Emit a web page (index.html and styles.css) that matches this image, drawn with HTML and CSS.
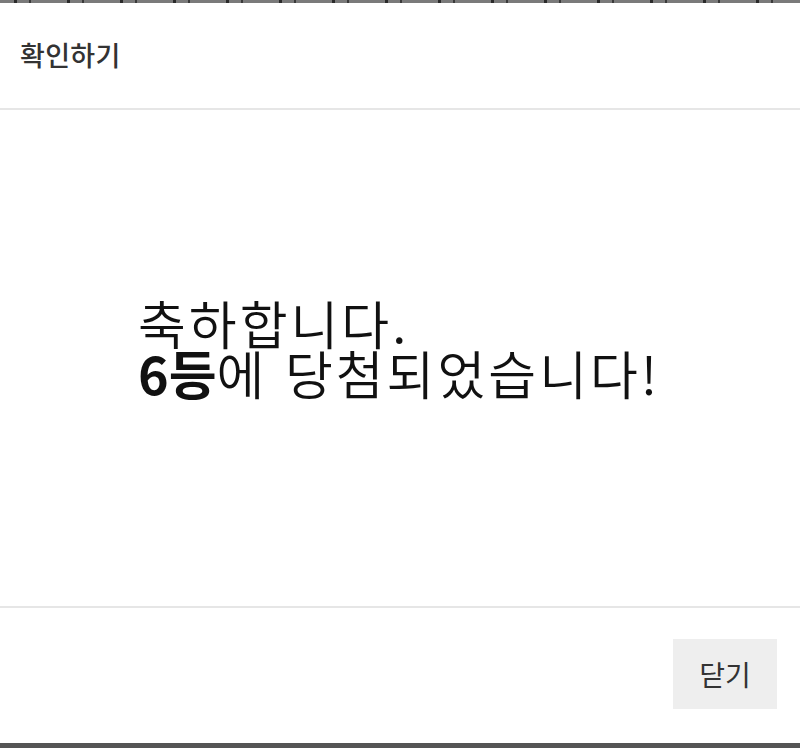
FILE: index.html
```html
<!DOCTYPE html>
<html lang="ko">
<head>
<meta charset="utf-8">
<link rel="stylesheet" href="styles.css">
</head>
<body>
<div class="backdrop-top"></div>
<div class="modal">
  <div class="modal-header">확인하기</div>
  <div class="modal-body">
    <p class="msg">축하합니다.<br><strong>6등</strong>에 당첨되었습니다!</p>
  </div>
  <div class="modal-footer">
    <button class="btn-close">닫기</button>
  </div>
</div>
</body>
</html>
```
FILE: styles.css
```css
html, body {
  margin: 0;
  padding: 0;
}
body {
  width: 800px;
  height: 748px;
  background: #555555;
  font-family: "Noto Sans CJK KR", "Noto Sans", sans-serif;
  overflow: hidden;
}
.backdrop-top {
  height: 3px;
  background-color: #7a7a7a;
  background-image: repeating-linear-gradient(90deg, transparent 0 14px, #2a2a2a 14px 17px, transparent 17px 29px, #3a3a3a 29px 31px, transparent 31px 53px);
}
.modal {
  background: #ffffff;
  height: 740px;
  display: flex;
  flex-direction: column;
}
.modal-header {
  height: 107px;
  box-sizing: border-box;
  border-bottom: 2px solid #e6e6e6;
  padding-left: 20px;
  display: flex;
  align-items: center;
  font-size: 27px;
  font-weight: 500;
  letter-spacing: 0.3px;
  color: #333333;
  padding-bottom: 2px;
}
.modal-body {
  height: 498px;
  box-sizing: border-box;
  border-bottom: 2px solid #e6e6e6;
  display: flex;
  align-items: center;
  padding-left: 138px;
}
.msg {
  margin: 0;
  font-size: 52px;
  letter-spacing: 3px;
  line-height: 50px;
  color: #111111;
  font-weight: 350;
  padding-bottom: 20px;
}
.msg strong {
  font-weight: 700;
  letter-spacing: 0;
}
.modal-footer {
  flex: 1;
  display: flex;
  justify-content: flex-end;
  align-items: flex-start;
  padding: 31px 23px 0 0;
}
.btn-close {
  width: 104px;
  height: 70px;
  border: none;
  background: #eeeeee;
  font-family: "Noto Sans CJK KR", "Noto Sans", sans-serif;
  font-size: 28px;
  color: #333333;
  padding: 0;
}
```
